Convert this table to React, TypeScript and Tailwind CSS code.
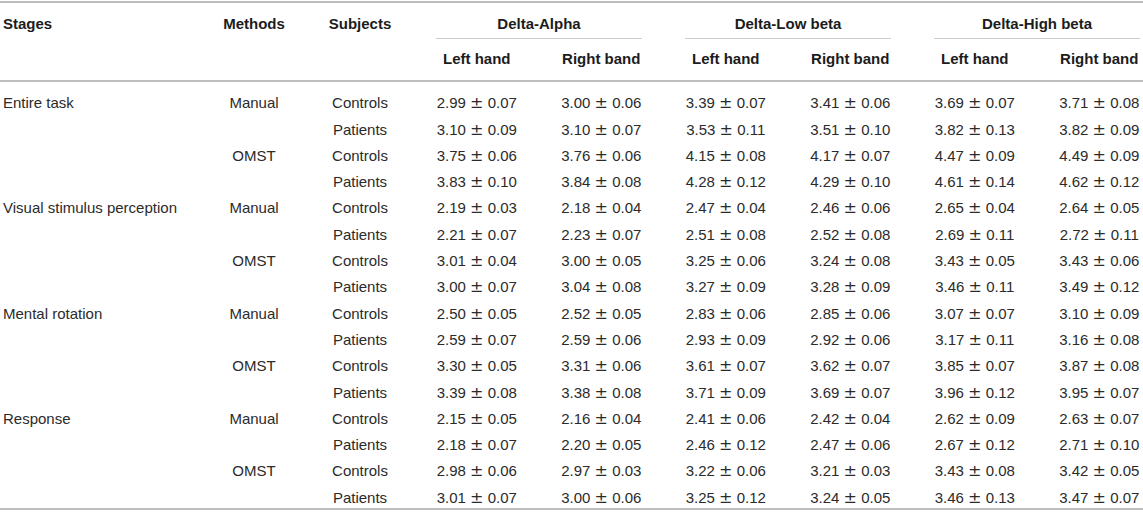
import React from 'react';

type Row = {stage?: string; method?: string; subject: string; values: string[]};

const groups = [
    {stage: 'Entire task', rows: [
        ['Manual', 'Controls', '2.99|0.07', '3.00|0.06', '3.39|0.07', '3.41|0.06', '3.69|0.07', '3.71|0.08'],
        ['', 'Patients', '3.10|0.09', '3.10|0.07', '3.53|0.11', '3.51|0.10', '3.82|0.13', '3.82|0.09'],
        ['OMST', 'Controls', '3.75|0.06', '3.76|0.06', '4.15|0.08', '4.17|0.07', '4.47|0.09', '4.49|0.09'],
        ['', 'Patients', '3.83|0.10', '3.84|0.08', '4.28|0.12', '4.29|0.10', '4.61|0.14', '4.62|0.12'],
    ]},
    {stage: 'Visual stimulus perception', rows: [
        ['Manual', 'Controls', '2.19|0.03', '2.18|0.04', '2.47|0.04', '2.46|0.06', '2.65|0.04', '2.64|0.05'],
        ['', 'Patients', '2.21|0.07', '2.23|0.07', '2.51|0.08', '2.52|0.08', '2.69|0.11', '2.72|0.11'],
        ['OMST', 'Controls', '3.01|0.04', '3.00|0.05', '3.25|0.06', '3.24|0.08', '3.43|0.05', '3.43|0.06'],
        ['', 'Patients', '3.00|0.07', '3.04|0.08', '3.27|0.09', '3.28|0.09', '3.46|0.11', '3.49|0.12'],
    ]},
    {stage: 'Mental rotation', rows: [
        ['Manual', 'Controls', '2.50|0.05', '2.52|0.05', '2.83|0.06', '2.85|0.06', '3.07|0.07', '3.10|0.09'],
        ['', 'Patients', '2.59|0.07', '2.59|0.06', '2.93|0.09', '2.92|0.06', '3.17|0.11', '3.16|0.08'],
        ['OMST', 'Controls', '3.30|0.05', '3.31|0.06', '3.61|0.07', '3.62|0.07', '3.85|0.07', '3.87|0.08'],
        ['', 'Patients', '3.39|0.08', '3.38|0.08', '3.71|0.09', '3.69|0.07', '3.96|0.12', '3.95|0.07'],
    ]},
    {stage: 'Response', rows: [
        ['Manual', 'Controls', '2.15|0.05', '2.16|0.04', '2.41|0.06', '2.42|0.04', '2.62|0.09', '2.63|0.07'],
        ['', 'Patients', '2.18|0.07', '2.20|0.05', '2.46|0.12', '2.47|0.06', '2.67|0.12', '2.71|0.10'],
        ['OMST', 'Controls', '2.98|0.06', '2.97|0.03', '3.22|0.06', '3.21|0.03', '3.43|0.08', '3.42|0.05'],
        ['', 'Patients', '3.01|0.07', '3.00|0.06', '3.25|0.12', '3.24|0.05', '3.46|0.13', '3.47|0.07'],
    ]},
];

const rows: Row[] = groups.flatMap(g =>
    g.rows.map((r, i) => ({
        stage: i === 0 ? g.stage : '',
        method: r[0],
        subject: r[1],
        values: r.slice(2),
    }))
);

const cols = 'grid grid-cols-[202.5px_103px_109px_124.5px_124.5px_124.5px_124.5px_124.5px_124.5px]';

const Value = ({v}: {v: string}) => {
    const [mean, sd] = v.split('|');
    return (
        <span className="whitespace-nowrap">
            {mean} <span className="font-['DejaVu_Sans',sans-serif] text-[16px] leading-[18px]">±</span> {sd}
        </span>
    );
};

const App = () => {
    return (
        <div className="w-[1143px] h-[523px] overflow-hidden bg-white font-['Liberation_Sans',Arial,sans-serif] text-[15px] text-[#2b2b2b]">
            <div className="w-[1165px] mt-[1px] border-t-2 border-[#bdbdbd]">
                {/* header */}
                <div className={`${cols} font-bold text-[#1c1c1c] leading-[18px]`}>
                    <div className="h-[35.5px] pt-[12px] pl-[3px]">Stages</div>
                    <div className="h-[35.5px] pt-[12px] text-center">Methods</div>
                    <div className="h-[35.5px] pt-[12px] text-center">Subjects</div>
                    {['Delta-Alpha', 'Delta-Low beta', 'Delta-High beta'].map(g => (
                        <div key={g} className="col-span-2 h-[35.5px] flex flex-col">
                            <div className="flex-1 pt-[12px] text-center">{g}</div>
                            <div className="mx-[21.5px] border-b border-[#cccccc]"/>
                        </div>
                    ))}
                </div>
                <div className={`${cols} h-[43px] items-center font-bold text-[#1c1c1c] leading-[18px] border-b-2 border-[#bdbdbd]`}>
                    <div/>
                    <div/>
                    <div/>
                    {['Left hand', 'Right band', 'Left hand', 'Right band', 'Left hand', 'Right band'].map((h, i) => (
                        <div key={i} className="text-center">{h}</div>
                    ))}
                </div>

                {/* body */}
                <div className="pt-[5.3px] border-b-2 border-[#bdbdbd]">
                    {rows.map((r, i) => (
                        <div key={i} className={`${cols} h-[26.3px] pt-[7.5px] leading-[18px]`}>
                            <div className="pl-[3px] whitespace-nowrap">{r.stage}</div>
                            <div className="text-center">{r.method}</div>
                            <div className="text-center">{r.subject}</div>
                            {r.values.map((v, j) => (
                                <div key={j} className="text-center">
                                    <Value v={v}/>
                                </div>
                            ))}
                        </div>
                    ))}
                </div>
            </div>
        </div>
    );
};

export default App;
